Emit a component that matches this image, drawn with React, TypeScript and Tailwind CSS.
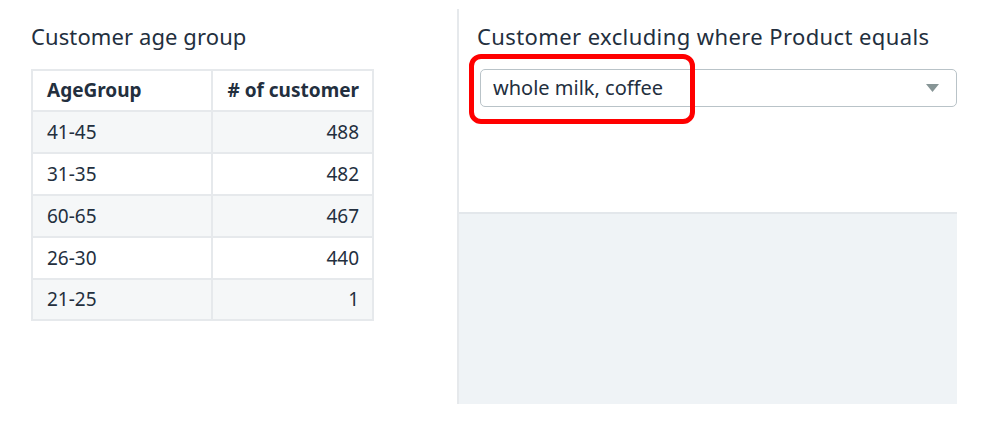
import React from 'react';

const rows = [
    { group: '41-45', count: 488, h: 'h-[42px]' },
    { group: '31-35', count: 482, h: 'h-[42px]' },
    { group: '60-65', count: 467, h: 'h-[42px]' },
    { group: '26-30', count: 440, h: 'h-[42px]' },
    { group: '21-25', count: 1, h: 'h-[41px]' },
];

export default function App() {
    return (
        <main className="w-[996px] h-[440px] bg-white flex text-[#232f3e] font-['Noto_Sans',sans-serif] overflow-hidden">
            {/* Left visual: table */}
            <section className="ml-[31px] w-[343px] shrink-0 pt-[20px]">
                <h2 className="text-[22px] leading-[32px] h-[49px] tracking-[0.1px]">Customer age group</h2>
                <table className="w-full border-collapse border-2 border-[#e6e9ec] text-[19px]">
                    <thead>
                        <tr className="h-[41px] bg-white">
                            <th className="text-left font-bold pl-[14px] border-2 border-[#e6e9ec] w-[180px]">AgeGroup</th>
                            <th className="text-right font-bold pr-[13px] border-2 border-[#e6e9ec]"># of customer</th>
                        </tr>
                    </thead>
                    <tbody>
                        {rows.map((r, i) => (
                            <tr key={r.group} className={`${r.h} ${i % 2 === 0 ? 'bg-[#f5f7f8]' : 'bg-white'}`}>
                                <td className="pl-[14px] border-2 border-[#e6e9ec]">{r.group}</td>
                                <td className="text-right pr-[13px] border-2 border-[#e6e9ec]">{r.count}</td>
                            </tr>
                        ))}
                    </tbody>
                </table>
            </section>

            {/* Right visual: filter control */}
            <section className="ml-[83px] mt-[9px] w-[500px] h-[395px] shrink-0 border-l-2 border-[#e6e9ec] flex flex-col">
                <div className="relative h-[203px] pt-[11px]">
                    <h2 className="pl-[18px] text-[22px] leading-[32px] h-[49px] tracking-[0.4px]">Customer excluding where Product equals</h2>
                    <div className="ml-[21px] h-[38px] border border-[#b9c3c8] rounded-[5px] flex items-center justify-between pl-[12px] pr-[17px] text-[20px]">
                        <span>whole milk, coffee</span>
                        <svg width="13" height="8" viewBox="0 0 13 8">
                            <path d="M0 0 H13 L6.5 8 Z" fill="#879596" />
                        </svg>
                    </div>
                    {/* highlight */}
                    <div className="absolute left-[10px] top-[45px] w-[226px] h-[70px] border-[5px] border-[#ff0000] rounded-[12px]" />
                </div>
                <div className="flex-1 bg-[#eff3f6] border-t-2 border-[#e3e7eb]" />
            </section>
        </main>
    );
}
